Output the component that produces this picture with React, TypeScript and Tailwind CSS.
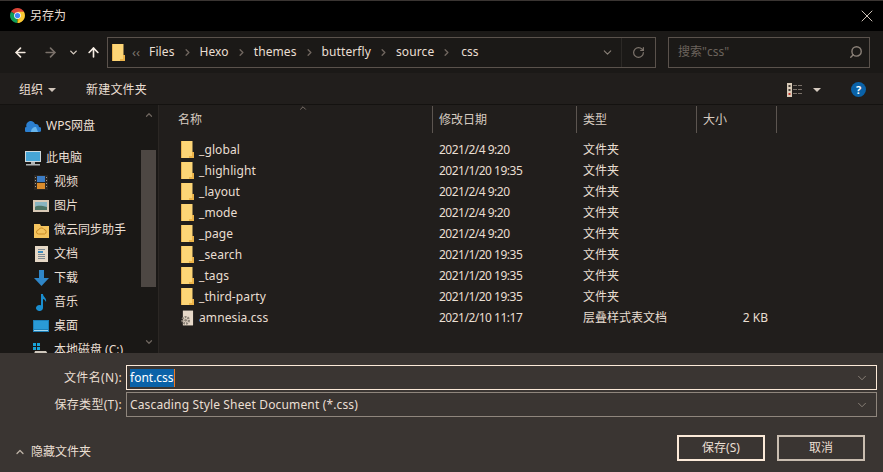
import { ArrowLeft, ArrowRight, ArrowUp, ChevronDown, ChevronRight, ChevronUp, RotateCw, Search, X } from 'lucide-react';

const folders = [
  ['_global', '2021/2/4 9:20'],
  ['_highlight', '2021/1/20 19:35'],
  ['_layout', '2021/2/4 9:20'],
  ['_mode', '2021/2/4 9:20'],
  ['_page', '2021/2/4 9:20'],
  ['_search', '2021/1/20 19:35'],
  ['_tags', '2021/1/20 19:35'],
  ['_third-party', '2021/1/20 19:35'],
];

function Folder({ className = '' }: { className?: string }) {
  return (
    <svg width="13" height="17" viewBox="0 0 13 17" className={className}>
      <path d="M0 0h11.500v17H0z" fill="#fdd576" />
      <path d="M11 11h2v6H8v-2h3z" fill="#eeb54a" />
      <path d="M0 0h1v17H0z" fill="#e9b351" />
    </svg>
  );
}

function ChromeIcon() {
  return (
    <svg width="15" height="15" viewBox="0 0 16 16">
      <path d="M8 8 1.100 4A8 8 0 0 1 14.900 4z" fill="#db4437" />
      <path d="M8 8 1.100 4A8 8 0 0 0 8 16z" fill="#0f9d58" />
      <path d="M8 8h6.900A8 8 0 0 1 8 16z" fill="#f4b400" />
      <path d="M8 4h6.900A8 8 0 0 1 8 16l3.400-6z" fill="#fcc934" />
      <circle cx="8" cy="8" r="3.600" fill="#fff" />
      <circle cx="8" cy="8" r="2.800" fill="#4285f4" />
    </svg>
  );
}

function Crumb({ label }: { label: string }) {
  return (
    <>
      <span className="tracking-[0.1px]">{label}</span>
      <ChevronRight size={11} strokeWidth={3} className="mx-[7px] text-[#6f665f]" />
    </>
  );
}

function NavItem({ label, icon, indent, top }: { label: string; icon: React.ReactNode; indent?: boolean; top?: string }) {
  return (
    <div className={`flex h-6 items-center ${indent ? 'pl-[33px]' : 'pl-[25px]'} ${top ?? ''}`}>
      <span className="flex h-4 w-[16px] items-center justify-center">{icon}</span>
      <span className="ml-[5px] whitespace-nowrap">{label}</span>
    </div>
  );
}

function HeaderCell({ label, className }: { label: string; className: string }) {
  return (
    <div className={`flex h-[27px] items-center border-r border-[#5c5550] ${className}`}>{label}</div>
  );
}

function Row({ name, date, type, size, icon }: { name: string; date: string; type: string; size?: string; icon: React.ReactNode }) {
  return (
    <div className="flex h-[21px] items-center">
      <div className="flex w-[266px] items-center pl-[14px]">
        <span className="flex w-[13px] justify-center">{icon}</span>
        <span className="ml-[5px] tracking-[0.1px]">{name}</span>
      </div>
      <div className="w-[144px] pl-[6px] tracking-[-0.5px]">{date}</div>
      <div className="w-[120px] pl-[6px]">{type}</div>
      <div className="w-[80px] pr-[9px] text-right">{size}</div>
    </div>
  );
}

export default function App() {
  return (
    <div className="flex h-[472px] w-[883px] flex-col overflow-hidden bg-[#211e1c] text-[12px] text-[#eadfd3] [font-family:'Noto_Sans','Noto_Sans_CJK_SC',sans-serif]">
      {/* title bar */}
      <div className="flex h-[31px] items-center border-t border-[#3a3532] bg-black pb-[1px] pl-[10px] pr-[6px]">
        <ChromeIcon />
        <span className="ml-[5px]">另存为</span>
        <X size={20} strokeWidth={1} className="ml-auto text-[#f5e8dc]" />
      </div>

      {/* nav bar */}
      <div className="flex h-[42px] items-center bg-[#1b1917] pl-[13px]">
        <ArrowLeft size={15} strokeWidth={2.6} className="text-[#f3e9df]" />
        <ArrowRight size={15} strokeWidth={2.6} className="ml-[15px] text-[#7a716a]" />
        <ChevronDown size={11} strokeWidth={3} className="ml-[10px] text-[#d6cbc0]" />
        <ArrowUp size={15} strokeWidth={2.6} className="ml-[7px] text-[#f7eee5]" />
        <div className="ml-[6px] flex h-[31px] w-[549px] items-center border border-[#5a524c] pl-[4px]">
          <Folder />
          <span className="ml-[7px] mr-[9px] text-[13px] leading-none text-[#7d746c]">‹‹</span>
          <Crumb label="Files" />
          <Crumb label="Hexo" />
          <Crumb label="themes" />
          <Crumb label="butterfly" />
          <Crumb label="source" />
          <span className="ml-[2px]">css</span>
          <ChevronDown size={13} strokeWidth={2} className="ml-auto mr-[7px] text-[#8a8078]" />
          <div className="flex h-full w-[34px] items-center justify-center border-l border-[#2c2926]">
            <RotateCw size={13} strokeWidth={2.2} className="text-[#7d746c]" />
          </div>
        </div>
        <div className="ml-[12px] flex h-[31px] w-[202px] items-center justify-between border border-[#5a524c] pl-[9px] pr-[6px] text-[#6b635c]">
          <span>搜索"css"</span>
          <Search size={14} strokeWidth={2.4} className="-scale-x-100 text-[#8b8178]" />
        </div>
      </div>

      {/* toolbar */}
      <div className="flex h-[32px] items-center border-b border-[#141210] pl-[19px] pr-[17px] pt-[2px]">
        <span>组织</span>
        <span className="ml-[5px] h-0 w-0 border-x-[4px] border-t-[4px] border-x-transparent border-t-[#cfc4b9]" />
        <span className="ml-[30px] tracking-[0.2px]">新建文件夹</span>
        <div className="ml-auto flex items-center">
          <svg width="16" height="14" viewBox="0 0 16 14">
            <path d="M0 0h5v14H0z" fill="#d9cbb8" />
            <path d="M1.500 2h2v2h-2zM1.500 6h2v2h-2z" fill="#443c36" />
            <path d="M1.500 10h2v2h-2z" fill="#c53a2e" />
            <path d="M6 2h4v1H6zM11 2h4v1h-4zM6 6h4v1H6zM11 6h4v1h-4zM6 10h4v1H6zM11 10h4v1h-4z" fill="#7b726a" />
          </svg>
          <span className="ml-[10px] h-0 w-0 border-x-[4px] border-t-[4px] border-x-transparent border-t-[#d6cbc0]" />
          <span className="ml-[30px] flex h-[15px] w-[15px] items-center justify-center rounded-full bg-[#0a62a8] text-[11px] font-bold leading-none text-white">?</span>
        </div>
      </div>

      {/* main */}
      <div className="flex h-[248px]">
        <aside className="relative flex h-full w-[159px] shrink-0 overflow-hidden border-r border-[#2b2724] bg-[#1a1816]">
          <div className="flex-1 pt-[9px]">
            <NavItem
              label="WPS网盘"
              icon={
                <svg width="16" height="11" viewBox="0 0 16 11">
                  <path d="M2 11a2.500 2.500 0 0 1-.5-5A4.500 4.500 0 0 1 10 3a3.500 3.500 0 0 1 4 3 2.500 2.500 0 0 1 0 5z" fill="#2b7fd0" />
                  <path d="M6 11c0-3 2-5 5-5l2 5z" fill="#67b5ec" />
                </svg>
              }
            />
            <NavItem
              top="mt-[8px]"
              label="此电脑"
              icon={
                <svg width="16" height="15" viewBox="0 0 16 15">
                  <path d="M0 0h16v11H0z" fill="#cfd8dc" />
                  <path d="M1 1h14v9H1z" fill="#47a5d6" />
                  <path d="M6 11h4v2H6zM1 13h14v1.500H1z" fill="#aeb2b3" />
                </svg>
              }
            />
            <NavItem
              indent
              label="视频"
              icon={
                <svg width="14" height="15" viewBox="0 0 14 15">
                  <path d="M0 0h14v15H0z" fill="#2a2622" />
                  <path d="M3 1h8v6H3z" fill="#3c7cc4" />
                  <path d="M3 8h8v6H3z" fill="#d98b2b" />
                  <path d="M1 2h1v1H1zM1 5h1v1H1zM1 8h1v1H1zM1 11h1v1H1zM12 2h1v1h-1zM12 5h1v1h-1zM12 8h1v1h-1zM12 11h1v1h-1z" fill="#a89a8a" />
                </svg>
              }
            />
            <NavItem
              indent
              label="图片"
              icon={
                <svg width="16" height="12" viewBox="0 0 16 12">
                  <path d="M0 0h16v12H0z" fill="#d8c9b6" />
                  <path d="M2 2h12v8H2z" fill="#88b4c0" />
                  <path d="M2 7c3-2 7-1 12 0v3H2z" fill="#4d7465" />
                </svg>
              }
            />
            <NavItem
              indent
              label="微云同步助手"
              icon={
                <svg width="15" height="15" viewBox="0 0 15 15">
                  <path d="M0 1h6l1 2h8v12H0z" fill="#f5c45e" />
                  <path d="M4.500 11a2 2 0 0 1 0-4 3 3 0 0 1 5.500-.5A2.300 2.300 0 0 1 10.500 11z" fill="none" stroke="#c98a25" />
                </svg>
              }
            />
            <NavItem
              indent
              label="文档"
              icon={
                <svg width="13" height="16" viewBox="0 0 13 16">
                  <path d="M0 0h13v16H0z" fill="#e6d8c6" />
                  <path d="M3 3h7v1H3zM3 8h7v1H3zM3 10h7v1H3zM3 12h7v1H3z" fill="#7f8a92" />
                  <path d="M3 5h5v2H3z" fill="#3f8dc0" />
                </svg>
              }
            />
            <NavItem
              indent
              label="下载"
              icon={
                <svg width="15" height="16" viewBox="0 0 15 16">
                  <path d="M5 0h5v8h5l-7.500 8L0 8h5z" fill="#2f86c8" />
                </svg>
              }
            />
            <NavItem
              indent
              label="音乐"
              icon={
                <svg width="11" height="17" viewBox="0 0 11 17">
                  <path d="M5 0h2c0 3 4 4 3 8-1-2-2-3-3-3v9a3.500 3 0 1 1-2-2.700z" fill="#1a8ecf" />
                </svg>
              }
            />
            <NavItem
              indent
              label="桌面"
              icon={
                <svg width="16" height="12" viewBox="0 0 16 12">
                  <path d="M0 0h16v12H0z" fill="#1c7fb8" />
                  <path d="M1 1h14v8H1z" fill="#2a9ad6" />
                  <path d="M1 10h14v1H1z" fill="#a5d8ef" />
                </svg>
              }
            />
            <NavItem
              indent
              label="本地磁盘 (C:)"
              icon={
                <svg width="16" height="15" viewBox="0 0 16 15">
                  <path d="M0 0h3v3H0zM4 0h3v3H4zM0 4h3v3H0zM4 4h3v3H4z" fill="#18a3d8" />
                  <path d="M2 8h11l2 3v4H1v-4z" fill="#cfc8bd" />
                </svg>
              }
            />
          </div>
          <div className="mr-[2px] flex h-full w-[15px] shrink-0 flex-col items-center">
            <ChevronUp size={10} strokeWidth={3} className="mt-[5px] text-[#6d655e]" />
            <div className="mt-[30px] h-[137px] w-full bg-[#4d4743]" />
            <ChevronDown size={10} strokeWidth={3} className="mt-[50px] text-[#6d655e]" />
          </div>
        </aside>

        <section className="relative min-w-0 flex-1 pl-[12px]">
          <ChevronUp size={10} strokeWidth={2} className="absolute left-[139px] top-[-2px] text-[#8a8078]" />
          <div className="mt-[1px] flex h-[27px] text-[#d7ccc1]">
            <HeaderCell label="名称" className="w-[262px] pl-[7px]" />
            <HeaderCell label="修改日期" className="w-[144px] pl-[6px]" />
            <HeaderCell label="类型" className="w-[120px] pl-[6px]" />
            <HeaderCell label="大小" className="w-[80px] pl-[6px]" />
          </div>
          <div className="-ml-[4px] pt-[6px] text-[#e9ded2]">
            {folders.map(([name, date]) => (
              <Row key={name} name={name} date={date} type="文件夹" icon={<Folder />} />
            ))}
            <Row
              name="amnesia.css"
              date="2021/2/10 11:17"
              type="层叠样式表文档"
              size="2 KB"
              icon={
                <svg width="14" height="16" viewBox="0 0 14 16">
                  <path d="M2 0h11v16H2z" fill="#e6d8c8" />
                  <circle cx="5" cy="10.500" r="3.500" fill="none" stroke="#8d8479" strokeWidth="2.500" strokeDasharray="2 1" />
                  <circle cx="5" cy="10.500" r="1.500" fill="#8d8479" />
                </svg>
              }
            />
          </div>
        </section>
      </div>

      {/* bottom form */}
      <div className="flex flex-1 flex-col bg-[#3a3532] pr-[6px]">
        <div className="mt-[12px] flex h-[25px] items-center">
          <label className="w-[122px] shrink-0 text-right tracking-[0.35px]">文件名(N):</label>
          <div className="ml-[4px] flex h-[25px] flex-1 items-center border border-[#fbe9d8] pl-[3px] pr-[7px]">
            <span className="bg-[#0a62a8] leading-[18px] text-white">font.css</span>
            <span className="h-[18px] w-px bg-[#f07a1f]" />
            <ChevronDown size={14} strokeWidth={1.2} className="ml-auto text-[#a89d92]" />
          </div>
        </div>
        <div className="mt-[2px] flex h-[25px] items-center">
          <label className="w-[122px] shrink-0 text-right tracking-[0.3px]">保存类型(T):</label>
          <div className="ml-[4px] flex h-[25px] flex-1 items-center border border-[#8f867d] pl-[3px] pr-[7px]">
            <span className="tracking-[0.15px]">Cascading Style Sheet Document (*.css)</span>
            <ChevronDown size={14} strokeWidth={1.2} className="ml-auto text-[#a89d92]" />
          </div>
        </div>
        <div className="mt-[18px] flex items-center pl-[14px] pr-[12px]">
          <div className="mt-[7px] flex items-center">
            <ChevronUp size={12} strokeWidth={2.5} className="text-[#bdb2a7]" />
            <span className="ml-[5px]">隐藏文件夹</span>
          </div>
          <button className="ml-auto flex h-[26px] w-[88px] items-center justify-center border-2 border-[#fbe9d8] text-[#eadfd3]">
            保存(S)
          </button>
          <button className="ml-[12px] flex h-[26px] w-[88px] items-center justify-center border-2 border-[#c9bdb0] text-[#eadfd3]">
            取消
          </button>
        </div>
      </div>
    </div>
  );
}
